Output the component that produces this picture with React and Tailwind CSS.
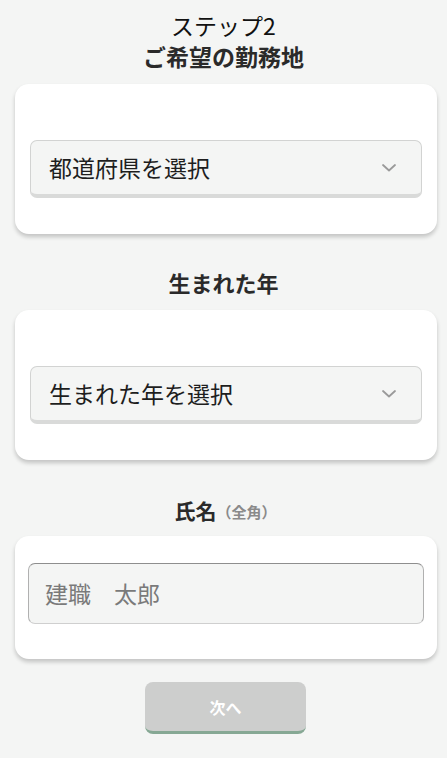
import React from "react";

function Chevron() {
  return (
    <svg width="16" height="10" viewBox="0 0 16 10" fill="none" className="shrink-0">
      <path d="M2 2l6 5.5L14 2" stroke="#9a9a9a" strokeWidth="1.8" strokeLinecap="round" strokeLinejoin="round" />
    </svg>
  );
}

function SelectBox({ label }) {
  return (
    <div className="h-[58px] flex items-center justify-between pl-[18px] pr-[24px] bg-[#f4f5f4] border border-[#d2d3d2] border-b-[4px] border-b-[#d9dad9] rounded-[7px]">
      <span className="text-[23px] text-[#1e1e1e] leading-none">{label}</span>
      <Chevron />
    </div>
  );
}

function Card({ className, children }) {
  return (
    <div className={"ml-[15px] mr-[10px] bg-white rounded-[14px] shadow-[0_3px_4px_rgba(0,0,0,0.2)] " + className}>
      {children}
    </div>
  );
}

export default function App() {
  return (
    <div className="h-screen overflow-hidden bg-[#f4f5f4] font-['Noto_Sans_CJK_JP',sans-serif] pt-[10px]">
      <div className="text-center text-[23px] leading-[31px] text-[#111]">ステップ2</div>
      <div className="text-center text-[23px] leading-[31px] font-bold text-[#2a2a2a]">ご希望の勤務地</div>

      <Card className="mt-[12px] pt-[56px] pb-[36px] px-[15px]">
        <SelectBox label="都道府県を選択" />
      </Card>

      <div className="mt-[33px] h-[30px] flex items-center justify-center text-[22px] font-bold text-[#2a2a2a]">生まれた年</div>

      <Card className="mt-[13px] pt-[56px] pb-[36px] px-[15px]">
        <SelectBox label="生まれた年を選択" />
      </Card>

      <div className="mt-[35px] h-[30px] flex justify-center items-center font-bold pl-[4px]">
        <span className="text-[21px] leading-none text-[#2a2a2a]">氏名</span>
        <span className="text-[15px] leading-none text-[#8a8a8a] mt-[2px]">（全角）</span>
      </div>

      <Card className="mt-[11px] pt-[27px] pb-[35px] px-[13px]">
        <div className="h-[61px] flex items-center pl-[16px] bg-[#f4f5f4] border border-[#b0b0b0] border-t-[#8e8e8e] border-b-[#cfcfcf] rounded-[7px]">
          <span className="text-[23px] text-[#7a7a7a] leading-none">建職　太郎</span>
        </div>
      </Card>

      <div className="mt-[23px] flex justify-center pl-[4px]">
        <button className="w-[161px] h-[52px] bg-[#cdcecd] rounded-[8px] border-b-[3px] border-b-[#86a894] text-white text-[16px] font-bold">
          次へ
        </button>
      </div>
    </div>
  );
}
